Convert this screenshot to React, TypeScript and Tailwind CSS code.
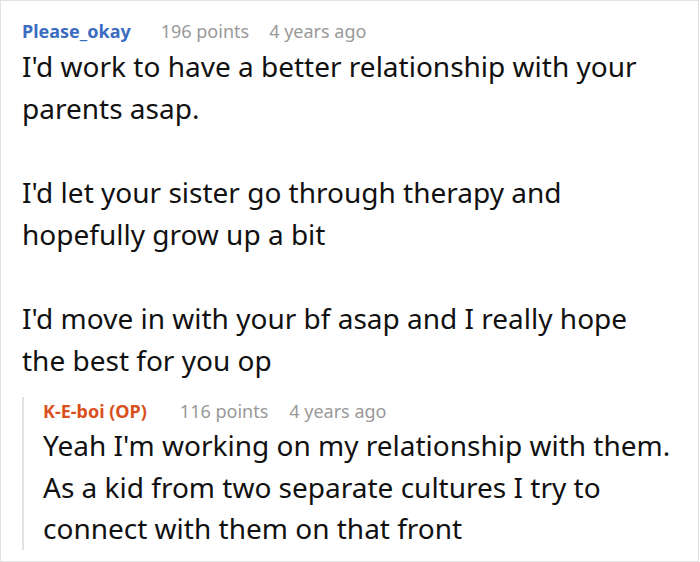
export default function App() {
  return (
    <div className="w-[699px] h-[562px] border border-[#e2e2e2] bg-white overflow-hidden" style={{ fontFamily: '"Noto Sans", sans-serif' }}>
      <div className="pl-[21px] pt-[16px]">
        <div className="flex items-baseline text-[18px] leading-[28px]">
          <span className="font-bold text-[#3b6cc0]">Please_okay</span>
          <span className="ml-[30px] text-[#999999]">196 points</span>
          <span className="ml-[20px] text-[#999999]">4 years ago</span>
        </div>
        <div className="text-[28px] leading-[42px] text-[#111111]">
          <p>I'd work to have a better relationship with your<br />parents asap.</p>
          <p className="mt-[42px]">I'd let your sister go through therapy and<br />hopefully grow up a bit</p>
          <p className="mt-[42px]">I'd move in with your bf asap and I really hope<br />the best for you op</p>
        </div>
        <div className="mt-[16px] border-l-2 border-[#e2e2e2] pl-[19px]">
          <div className="flex items-baseline text-[18px] leading-[28px]">
            <span className="font-bold text-[#d9501e]">K-E-boi (OP)</span>
            <span className="ml-[33px] text-[#999999]">116 points</span>
            <span className="ml-[21px] text-[#999999]">4 years ago</span>
          </div>
          <div className="text-[28px] leading-[41.5px] text-[#111111]">
            <p>Yeah I'm working on my relationship with them.<br />As a kid from two separate cultures I try to<br />connect with them on that front</p>
          </div>
        </div>
      </div>
    </div>
  );
}
